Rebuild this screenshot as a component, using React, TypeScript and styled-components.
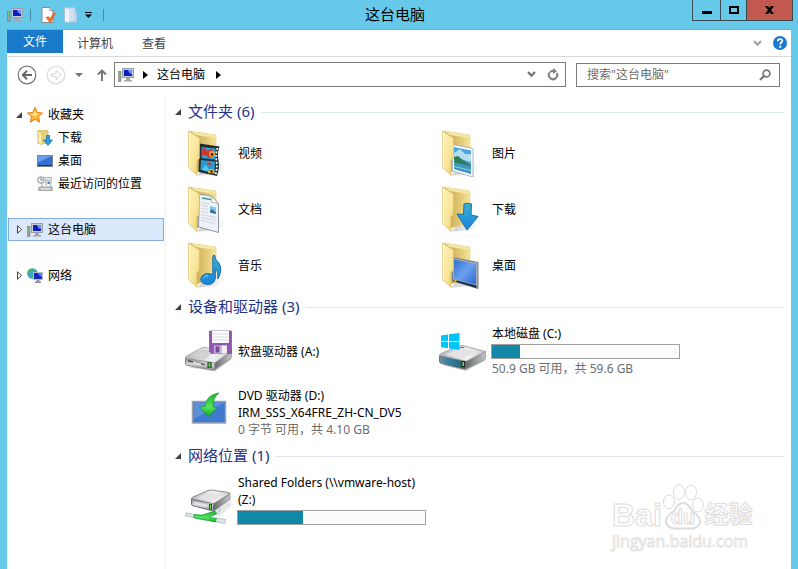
import React from 'react';
import styled, { createGlobalStyle, css } from 'styled-components';

const GlobalStyle = createGlobalStyle`
  * { box-sizing: border-box; }
  body {
    margin: 0;
    background: #66c9ea;
    color: #000;
    font: 12px/17px "Noto Sans", "Noto Sans CJK SC", sans-serif;
  }
  button, input { font: inherit; color: inherit; }
  h1, h2, ul { margin: 0; padding: 0; font-weight: 400; }
  ul { list-style: none; }
  svg { display: block; flex: none; }
`;

const Window = styled.div`
  display: flex;
  flex-direction: column;
  min-height: 100vh;
  background: #66c9ea;
  position: relative;
`;

const TitleBar = styled.header`
  display: grid;
  grid-template-columns: 1fr auto 1fr;
  height: 29px;
  padding-right: 5px;
`;

const QuickTools = styled.div`
  display: flex;
  align-items: center;
  padding-left: 7px;
`;

const Divider = styled.span`
  width: 1px;
  height: 12px;
  margin: 0 10px 0 7px;
  background: #4a8aa0;
`;

const PlainButton = styled.button`
  display: flex;
  align-items: center;
  justify-content: center;
  padding: 0;
  border: 0;
  background: none;
`;

const QuickButton = styled(PlainButton)`
  margin-right: 8px;
`;

const Title = styled.h1`
  padding-right: 3px;
  font-size: 15px;
  line-height: 29px;
`;

const WindowButtons = styled.div`
  display: flex;
  justify-self: end;
  height: 21px;
  border: 1px solid #3b4a50;
  border-top: 0;
`;

const WindowButton = styled(PlainButton)<{ $close?: boolean }>`
  width: ${p => (p.$close ? 46 : 26)}px;
  background: ${p => (p.$close ? '#c1594f' : 'none')};
  &:first-child { width: 27px; }
  & + & { border-left: 1px solid #3b4a50; }
`;

const Client = styled.div`
  flex: 1;
  display: flex;
  flex-direction: column;
  margin: 0 7px;
  border-top: 1px solid #7fa9b8;
  background: #fff;
`;

const Ribbon = styled.nav`
  display: flex;
  height: 27px;
  border-bottom: 1px solid #d9d9d9;
`;

const RibbonTab = styled.button<{ $active?: boolean }>`
  height: 23px;
  padding: 0 ${p => (p.$active ? 16 : 0)}px;
  margin-right: ${p => (p.$active ? 14 : 29)}px;
  border: 0;
  background: ${p => (p.$active ? '#1979ca' : 'none')};
  color: ${p => (p.$active ? '#fff' : '#444')};
  line-height: ${p => (p.$active ? 22 : 27)}px;
`;

const RibbonEnd = styled.div`
  display: flex;
  align-items: center;
  gap: 11px;
  margin-left: auto;
  padding-right: 4px;
`;

const AddressRow = styled.div`
  display: flex;
  align-items: center;
  height: 35px;
  padding: 0 11px 0 10px;
`;

const NavButtons = styled.div`
  display: flex;
  align-items: center;
  width: 97px;
`;

const NavButton = styled(PlainButton)<{ $gap?: number }>`
  margin-right: ${p => p.$gap ?? 0}px;
`;

const AddressBox = styled.div`
  flex: 1;
  display: flex;
  align-items: center;
  gap: 9px;
  height: 25px;
  padding: 0 6px 0 3px;
  border: 1px solid #7b7b7b;
`;

const Crumb = styled(PlainButton)`
  padding-right: 2px;
`;

const AddressEnd = styled.div`
  display: flex;
  gap: 11px;
  margin-left: auto;
`;

const SearchBox = styled.label`
  display: flex;
  align-items: center;
  width: 204px;
  height: 24px;
  margin-left: 10px;
  padding: 0 8px 0 10px;
  border: 1px solid #7b7b7b;
`;

const SearchInput = styled.input`
  flex: 1;
  min-width: 0;
  padding: 0;
  border: 0;
  outline: 0;
  background: none;
  &::placeholder { color: #6d6d6d; opacity: 1; }
`;

const Body = styled.div`
  flex: 1;
  display: flex;
  margin-top: 3px;
`;

const Sidebar = styled.nav`
  width: 159px;
  padding: 8px 1px;
  border-right: 1px solid #f2f2f2;
`;

const TreeGroup = styled.ul`
  & + & { margin-top: 23px; }
`;

const TreeLink = styled.a<{ $child?: boolean; $selected?: boolean }>`
  display: flex;
  align-items: center;
  gap: 5px;
  height: 23px;
  padding-left: ${p => (p.$child ? 28 : 7)}px;
  border: 1px solid transparent;
  color: #000;
  text-decoration: none;
  white-space: nowrap;
  ${p => p.$selected && css`
    border-color: #84acdd;
    background: #dbe9fd;
  `}
`;

const Content = styled.main`
  flex: 1;
  min-width: 0;
  padding: 5px 7px 0 9px;
`;

const SectionHead = styled.h2`
  display: flex;
  align-items: center;
  gap: 7px;
  height: 23px;
  margin-bottom: 2px;
  color: #1e3287;
  font-size: 15px;
  line-height: 23px;
  &::after {
    content: "";
    flex: 1;
    height: 1px;
    margin-top: 2px;
    background: #dbe7f3;
  }
`;

const Tiles = styled.ul<{ $spaced?: boolean }>`
  display: grid;
  grid-template-columns: repeat(auto-fill, 254px);
  row-gap: ${p => (p.$spaced ? 5 : 0)}px;
  padding: ${p => (p.$spaced ? '3px 0 4px 9px' : '0 0 2px 9px')};
`;

const Tile = styled.li`
  display: flex;
  align-items: center;
  gap: 5px;
  height: 56px;
`;

const TileText = styled.div`
  flex: 1;
  min-width: 0;
  padding-right: 12px;
`;

const Line = styled.div<{ $muted?: boolean }>`
  padding-left: 1px;
  color: ${p => (p.$muted ? '#6d6d6d' : '#000')};
`;

const Meter = styled.div`
  height: 15px;
  margin: 2px 0 1px;
  border: 1px solid #a0a0a0;
  background: #fbfbfb;
`;

const MeterFill = styled.div`
  height: 100%;
  background: #1188a6;
`;

const Watermark = styled.div`
  position: absolute;
  right: 43px;
  bottom: 17px;
  width: 143px;
  color: #fff;
  pointer-events: none;
`;

const MarkRow = styled.div`
  display: flex;
  align-items: flex-end;
  height: 47px;
  font: 700 32px/30px "Liberation Sans", "Noto Sans CJK SC", sans-serif;
  -webkit-text-stroke: 1px #dcdcdc;
`;

const MarkPaw = styled.span`
  position: relative;
  width: 42px;
  height: 47px;
`;

const MarkDu = styled.span`
  position: absolute;
  left: 9px;
  bottom: 3px;
  font-size: 20px;
  line-height: 20px;
`;

const MarkCn = styled.span`
  margin-left: 1px;
  font-size: 24px;
`;

const MarkUrl = styled.div`
  font: 16px/22px "Open Sans", sans-serif;
  -webkit-text-stroke: 1px #e4e4e4;
`;

/* ---------- small icons ---------- */

const PcIcon = () => (
  <svg width="16" height="16" viewBox="0 0 16 16">
    <rect x="4.5" y="1.5" width="11" height="9" fill="#c9ccd4" stroke="#9a9ea8" />
    <rect x="6" y="3" width="8" height="6" fill="#0a1fbd" />
    <path d="M10 3h4v4q-3 0-4-4z" fill="#6f8bf5" />
    <path d="M8 11h4v2h2v1.500H6V13h2z" fill="#a6a6a6" />
    <rect x="0.500" y="4.500" width="2.500" height="10" fill="#9da39d" stroke="#777" strokeWidth=".6" />
    <rect x="1.200" y="6" width="1.200" height="2" fill="#52e052" />
  </svg>
);

const PageCheckIcon = () => (
  <svg width="15" height="16" viewBox="0 0 15 16">
    <path d="M1 .5h8l3 3v12H1z" fill="#fff" stroke="#8d8d8d" />
    <path d="M9 .5v3h3" fill="#e6e6e6" stroke="#8d8d8d" />
    <path d="M5 10.500l2.500-1 1.500 2L13 5.500l1.500 1L10 15H8.500z" fill="#ee6e2e" stroke="#d25a22" strokeWidth=".5" />
  </svg>
);

const NewFolderIcon = () => (
  <svg width="13" height="16" viewBox="0 0 13 16">
    <path d="M.5.500h11V5l1 1v9H.5z" fill="#c4d8ee" stroke="#a9c1de" />
    <path d="M1 1l4 1.500v13L1 14.500z" fill="#edf4fb" />
    <path d="M6 2v12M8 2v12" stroke="#dceaf7" />
  </svg>
);

const CustomizeIcon = () => (
  <svg width="11" height="6" viewBox="0 0 11 6"><path d="M0 .5h7" stroke="#000" /><path d="M0 2.500h7L3.500 6z" fill="#000" /></svg>
);

const MinIcon = () => <svg width="10" height="10"><rect y="6" width="10" height="3" /></svg>;
const MaxIcon = () => <svg width="10" height="8"><rect x="1" y="1" width="8" height="6" fill="none" stroke="#000" strokeWidth="2" /></svg>;
const CloseIcon = () => (
  <svg width="9" height="8"><path d="M0 0h3l1.500 2L6 0h3L6 4l3 4H6L4.500 6 3 8H0l3-4z" /></svg>
);

const Chevron = ({ color }: { color: string }) => (
  <svg width="9" height="7" viewBox="0 0 9 7"><path d="M1 1l3.500 3.800L8 1" fill="none" stroke={color} strokeWidth="2" /></svg>
);

const HelpIcon = () => (
  <svg width="14" height="14" viewBox="0 0 14 14">
    <circle cx="7" cy="7" r="7" fill="#1979ca" />
    <path d="M4.800 5.300C4.800 2.400 9.400 2.500 9.300 5 9.200 6.500 7.200 6.600 7.200 8.500" fill="none" stroke="#fff" strokeWidth="1.800" />
    <rect x="6.200" y="9.800" width="2" height="2" fill="#fff" />
  </svg>
);

const CircleArrow = ({ forward }: { forward?: boolean }) => (
  <svg width="20" height="20" viewBox="0 0 20 20">
    <circle cx="10" cy="10" r="8.800" fill="none" stroke={forward ? '#dadada' : '#777'} strokeWidth="1.200" />
    {forward
      ? <path d="M5 8.800h5V5.500l5 4.500-5 4.500v-3.300H5z" fill="none" stroke="#d4d4d4" />
      : <path d="M15 10H6M10 5.800L5.800 10l4.200 4.200" fill="none" stroke="#666" strokeWidth="2" />}
  </svg>
);

const DownTriangle = () => <svg width="8" height="4"><path d="M0 0h8L4 4z" fill="#777" /></svg>;
const UpArrow = () => (
  <svg width="10" height="12" viewBox="0 0 10 12"><path d="M5 12V2M1 5.500L5 1.500l4 4" fill="none" stroke="#777" strokeWidth="2" /></svg>
);
const RightTriangle = () => <svg width="5" height="8"><path d="M0 0l5 4-5 4z" /></svg>;

const RefreshIcon = () => (
  <svg width="12" height="13" viewBox="0 0 12 13">
    <path d="M2.800 4.300A4.200 4.200 0 1 0 9.700 5" fill="none" stroke="#808080" strokeWidth="2" />
    <path d="M3 3.800Q4.500 2.800 6.500 3" fill="none" stroke="#808080" strokeWidth="2" />
    <path d="M6 0l4 3.200L6 6z" fill="#808080" />
  </svg>
);

const SearchIcon = () => (
  <svg width="12" height="12" viewBox="0 0 12 12">
    <circle cx="7.500" cy="4.500" r="3.400" fill="none" stroke="#777" strokeWidth="1.700" />
    <path d="M5 7L1 11" stroke="#777" strokeWidth="2.200" />
  </svg>
);

const OpenArrow = () => <svg width="6" height="6"><path d="M6 0v6H0z" fill="#404040" /></svg>;
const ClosedArrow = () => (
  <svg width="6" height="9"><path d="M1.500 .8v7.400L5.500 4.500z" fill="#fff" stroke="#404040" /></svg>
);

const StarIcon = () => (
  <svg width="16" height="16" viewBox="0 0 16 16">
    <path d="M8 .5l2.200 5 5.300.5-4 3.600 1.200 5.600L8 12.300l-4.700 2.900 1.200-5.600-4-3.600 5.300-.5z" fill="#ffb52e" stroke="#dc7d1b" />
    <path d="M8 3l1.300 3.500 3.200.3L8 9.500l-4.500-2.700 3.200-.3z" fill="#ffe08a" />
  </svg>
);

const SmallDownloadIcon = () => (
  <svg width="16" height="16" viewBox="0 0 16 16">
    <path d="M1 .5h10l.5 13H1z" fill="#ecd078" stroke="#cbb05a" strokeWidth=".6" />
    <path d="M1 .5l4 2.500v12L1 13z" fill="#fbeeb0" stroke="#cbb05a" strokeWidth=".6" />
    <path d="M9.500 5.500h3V10H15.500L11 15.500 6.500 10h3z" fill="#2e9be6" stroke="#14699f" strokeWidth=".7" />
  </svg>
);

const SmallDesktopIcon = () => (
  <svg width="16" height="16" viewBox="0 0 16 16">
    <rect x=".5" y="2.500" width="15" height="11" fill="#326fd0" stroke="#7c8796" />
    <path d="M1 3h14L1 9.500z" fill="#6c9de8" />
    <path d="M1 12.500h14" stroke="#1c3359" />
  </svg>
);

const RecentIcon = () => (
  <svg width="16" height="16" viewBox="0 0 16 16">
    <path d="M4 1.500h10.500l-1 10H5z" fill="#f3f6f9" stroke="#999" strokeWidth=".8" />
    <path d="M8 4h5M8 6h2M8 8h2" stroke="#9aa8b5" />
    <rect x="10.500" y="5.500" width="2.500" height="2.500" fill="#3f8fd8" />
    <path d="M2 11h13l.5 3.500h-14z" fill="#c2c2c2" stroke="#8b8b8b" strokeWidth=".7" />
    <path d="M4 13h9" stroke="#eee" />
    <circle cx="4" cy="4" r="3.300" fill="#eef3f7" stroke="#8b8f94" />
    <path d="M4 2v2h1.500" fill="none" stroke="#4b5560" strokeWidth=".8" />
  </svg>
);

const NetworkIcon = () => (
  <svg width="16" height="16" viewBox="0 0 16 16">
    <circle cx="5.500" cy="5.500" r="5.300" fill="#3aa0e0" />
    <path d="M3 .8C5 2 3 5 .8 7 0 4 1 2 3 .8zM6 1l3 1.500L7 5 5 4zM3 8l3-1v3.500z" fill="#42bf45" />
    <rect x="6.500" y="4.500" width="9" height="7" fill="#1329bd" stroke="#b9bfca" />
    <path d="M10.500 5h4.500v4q-3-1-4.500-4z" fill="#5c7df0" />
    <path d="M9.500 12h3v1.500H14V15H8v-1.500h1.500z" fill="#8f8f8f" />
  </svg>
);

/* ---------- 48px icons ---------- */

type FolderKind = 'video' | 'pictures' | 'docs' | 'downloads' | 'music' | 'desktop';

const folderInsert: Record<FolderKind, React.ReactNode> = {
  video: (
    <g>
      <path d="M15.500 14.500l20 3q-2.500 7-1 14t-1.500 15.500L14.500 43z" fill="#222d33" />
      <path d="M17.500 18l14 1.500-.5 11-13.500-1.500z" fill="#27a5dd" />
      <path d="M17 31l14 1.500-.5 12L16.500 41z" fill="#2d9bd2" />
      <path d="M18 20l3-1 2 3 4-2 3 2-1 5-4 2-4-3-3 1z" fill="#d1372f" />
      <circle cx="28" cy="25" r="3" fill="#f0a52a" /><circle cx="28" cy="25.500" r="1.400" fill="#541a16" />
      <path d="M23 34l2-1 3 3-2 1z" fill="#d1372f" />
      <path d="M24 44q0-4 3.500-4t3 4.500z" fill="#e8b232" /><circle cx="27.500" cy="42.500" r="1.200" fill="#3a1712" />
      <path d="M18 40l4-4 3 5-3 1z" fill="#58c9ea" />
      <path d="M33.500 19q-2 6-1 13t-1 14" fill="none" stroke="#eef4f6" strokeWidth="1.800" strokeDasharray="2 1.500" />
    </g>
  ),
  docs: (
    <g>
      <path d="M15.500 9.500q7 0 12.500 2l6.500 7v29L14.500 42z" fill="#eff1f8" stroke="#8f979e" />
      <path d="M28 11.500l-.5 5.500 7 1.500z" fill="#fff" stroke="#8f979e" strokeWidth=".7" />
      <path d="M18 13l9 1.500" stroke="#3b9c99" strokeWidth="1.300" />
      <path d="M17 17.500l8 1M17 20.500l7 1M17 23.500l7 1M17 26.500l7 1M17 29.500l15 3M17 32.500l15 3M17 35.500l14 3" stroke="#ccd0d8" strokeWidth=".9" />
      <path d="M26 21l6 1.500V29l-6-1.500z" fill="#82c6ee" />
      <path d="M26 26l2-2 4 3.500V29l-6-1.500z" fill="#2b7893" />
    </g>
  ),
  music: (
    <g fill="url(#blueFill)" stroke="#1e6aa6" strokeWidth="1">
      <path d="M28.800 17q0-3 1.500-3 1 5 4.500 8 4.500 6-1 16 .5-8-2.500-11v10q-1 6.500-7.500 6.500-7-.5-7-5.500 1-5.500 8-5.500l4 1z" />
      <path d="M19 37.500q1.500-2.500 5-3" fill="none" stroke="#9ad8f7" />
    </g>
  ),
  pictures: (
    <g>
      <path d="M14.500 15.500l20.500 4V48l-20.500-6z" fill="#fff" stroke="#a9b4bd" />
      <path d="M16 18l17 3.500V45l-17-5z" fill="#4aa5de" />
      <path d="M16 24l6-4 5 5 6 0v8l-17-5z" fill="#b5def0" />
      <path d="M16 28l4-1 6 5 7 4v2l-17-3z" fill="#2f7d55" />
      <path d="M16 33l17 4v8l-17-5z" fill="#3f96be" />
      <path d="M16 37l17 4v1l-17-4z" fill="#8dd0de" />
    </g>
  ),
  downloads: (
    <path d="M26 19q3-1.500 7.500 0L33 30l7 1.500L29 45 19 29l6.500.5z" fill="url(#blueFill)" stroke="#1670aa" />
  ),
  desktop: (
    <g>
      <path d="M14.500 16.500l25.500 5v26L14.500 40z" fill="#a7adb6" stroke="#767d87" />
      <path d="M16 18.500l22 4.500v20.500L16 38z" fill="url(#screenFill)" />
      <path d="M15.500 38.500L38.500 44.500v2.500l-23-7z" fill="#1a2c47" />
      <circle cx="17.500" cy="39.500" r="1.200" fill="#e3c23a" />
    </g>
  ),
};

const Gradients = () => (
  <svg width="0" height="0" aria-hidden="true">
    <defs>
      <linearGradient id="backFill" x1="0" x2="1"><stop offset="0" stopColor="#b99b45" /><stop offset=".5" stopColor="#dcc06b" /><stop offset="1" stopColor="#f6e397" /></linearGradient>
      <linearGradient id="flapFill" x1="0" x2="1" y2="1"><stop offset="0" stopColor="#fdf3ba" /><stop offset=".6" stopColor="#f8e59a" /><stop offset="1" stopColor="#e6c660" /></linearGradient>
      <linearGradient id="blueFill" x1="0" x2="0" y2="1"><stop offset="0" stopColor="#3db1cf" /><stop offset="1" stopColor="#1584e0" /></linearGradient>
      <linearGradient id="screenFill" x1="0" x2="1" y2="1"><stop offset="0" stopColor="#2f6fd0" /><stop offset=".5" stopColor="#6ba0ee" /><stop offset="1" stopColor="#2a66cf" /></linearGradient>
      <linearGradient id="topFill" x1="0" x2="1"><stop offset="0" stopColor="#b9b9bb" /><stop offset=".6" stopColor="#f1f1f2" /><stop offset="1" stopColor="#cfcfd0" /></linearGradient>
      <linearGradient id="sideFill" x1="0" x2="1"><stop offset="0" stopColor="#696a6c" /><stop offset="1" stopColor="#c5c6c8" /></linearGradient>
      <linearGradient id="frontFill" x1="0" x2="0" y2="1"><stop offset="0" stopColor="#8b8c8f" /><stop offset=".5" stopColor="#d4d5d8" /><stop offset="1" stopColor="#8f9093" /></linearGradient>
      <linearGradient id="tealFill" x1="0" x2="1"><stop offset="0" stopColor="#6b8d9c" /><stop offset=".4" stopColor="#2c7fa0" /><stop offset="1" stopColor="#2b5a68" /></linearGradient>
      <linearGradient id="greenFill" x1="0" x2="0" y2="1"><stop offset="0" stopColor="#1eaf35" /><stop offset=".6" stopColor="#53e558" /><stop offset="1" stopColor="#12a32b" /></linearGradient>
      <linearGradient id="shadowFill" x1="0" x2="1"><stop offset="0" stopColor="#999" stopOpacity=".5" /><stop offset="1" stopColor="#aaa" stopOpacity="0" /></linearGradient>
    </defs>
  </svg>
);

const FolderIcon = ({ kind }: { kind: FolderKind }) => (
  <svg width="48" height="48" viewBox="0 0 48 48">
    <path d="M13 46.500L30 30l13 8q-8 8-20 8z" fill="url(#shadowFill)" />
    <path d="M5 2l27 4v32l-19 5z" fill="url(#backFill)" stroke="#e6d185" strokeWidth=".6" />
    <path d="M6 2.300l25.500 3.900V9L12 6z" fill="#f7e7a4" />
    {folderInsert[kind]}
    <path d="M4.500 2l11 7v20.500l-2.500 2v15l-8.500-8z" fill="url(#flapFill)" stroke="#d8bb66" strokeWidth=".6" />
    <path d="M5.500 4v34" stroke="#fffbe0" strokeWidth=".8" />
  </svg>
);

const FloppyDriveIcon = () => (
  <svg width="48" height="48" viewBox="0 0 48 48" strokeLinejoin="round">
    <path d="M4 40l27 4.500 16-12v-2l-15 7z" fill="#bbb" opacity=".7" />
    <path d="M1.500 31v6q0 1 2 1.500L29 43q2 .5 2-1v-7z" fill="url(#frontFill)" stroke="#77787b" strokeWidth=".8" />
    <path d="M31 35v7.500l16-11q.5-.5.500-2V24z" fill="url(#sideFill)" stroke="#8a8b8d" strokeWidth=".6" />
    <path d="M1.500 31q0-1.500 2-2.500L17 21q1.500-.8 4-.5l26.500 3.500L32 35q-1.500 1-3.500.500z" fill="url(#topFill)" stroke="#999" strokeWidth=".7" />
    <path d="M7 29.500l12-6.500 10 1.500-8 7z" fill="#d2d2d4" stroke="#bdbdbf" strokeWidth=".5" />
    <path d="M4 33l17 4v1.200L4 34.500z" fill="#4a4b4d" />
    <path d="M9 34.500l8 2v1.500l-8-2z" fill="#efefef" />
    <rect x="23.500" y="35" width="4" height="6" fill="#222" /><rect x="24.500" y="35.500" width="2" height="5" fill="#4ce03e" />
    <path d="M25.500 4h22v22.500h-20l-2-2z" fill="#9156b5" stroke="#7c4b9f" strokeWidth=".7" />
    <rect x="28" y="4" width="17" height="12" fill="#fff" />
    <path d="M28.500 7h16M28.500 10h16M28.500 13h16" stroke="#d3dbe3" />
    <rect x="30" y="18.500" width="13" height="8" fill="#cbbcd9" />
    <rect x="31.500" y="19.500" width="4" height="6" fill="#7d46a0" />
    <path d="M38 18.500h5v8h-5z" fill="#f0edf5" />
  </svg>
);

const LocalDiskIcon = () => (
  <svg width="48" height="48" viewBox="0 0 48 48" strokeLinejoin="round">
    <path d="M4 38l24 6 20-11-2-3-17 8z" fill="#bbb" opacity=".8" />
    <path d="M1.500 28.500v6q0 1.500 2 2L26 42q2 .5 2-1v-7z" fill="url(#tealFill)" stroke="#6b7175" strokeWidth=".9" />
    <path d="M28 34v8l18-9q1.500-1 1.500-2.500V24.500z" fill="url(#sideFill)" stroke="#8a8b8d" strokeWidth=".6" />
    <path d="M1.500 28.500q0-1 1.500-2L21 19q2-.8 4-.3l22.500 5.800L30 33.500q-1.500.8-3.500.5z" fill="url(#topFill)" stroke="#888" strokeWidth=".7" />
    <path d="M8 27.500l15-6 13 3q-5 5-13 6.500z" fill="#e4e4e6" />
    <ellipse cx="24" cy="20.500" rx="2.500" ry=".8" fill="#777" />
    <rect x="23.500" y="34" width="3.500" height="6" fill="#1d2b20" /><rect x="24.500" y="35" width="1.500" height="4" fill="#62e840" />
    <path d="M3 8.500L10 7.500V14H3zM11 7.300L21.500 6v8H11zM3 15h7v6.300L3 20.300zM11 15h10.500v8L11 21.500z" fill="#00c4f5" />
  </svg>
);

const DvdIcon = () => (
  <svg width="48" height="48" viewBox="0 0 48 48">
    <rect x="8.500" y="13.500" width="33" height="21.500" fill="#3f7ace" stroke="#9ba4ad" strokeWidth="1.500" />
    <path d="M9.500 14.500h31L9.500 31z" fill="#5d90d8" />
    <path d="M35 5q-6 4-6 14l4 .5L24.500 28.500 15.500 19l5.500-.5Q22 7 35 5z" fill="url(#greenFill)" stroke="#0e9a2b" strokeWidth=".7" />
  </svg>
);

const NetworkDriveIcon = () => (
  <svg width="48" height="48" viewBox="0 0 48 48" strokeLinejoin="round">
    <path d="M22 38l14 2 11-10V20l-16 14z" fill="#ddd" opacity=".7" />
    <path d="M2 37l9 1.500-1 3-8.500-1.500zM32 42l9.500 1.500-1 4-10-2zM30 35l5-3.500 1.500 3-5 3.500z" fill="#dde8ea" stroke="#a9b8bb" strokeWidth=".8" />
    <path d="M10 38.500l8 .5 13-4 1.500 3-7 3 7 1.500-1 3.500L10 42z" fill="url(#greenFill)" stroke="#128a3a" strokeWidth=".6" />
    <path d="M7.500 23v5q0 1.500 2 2L27.500 34.500q2 .5 2-1V27z" fill="url(#frontFill)" stroke="#66686b" strokeWidth=".9" />
    <path d="M10 25.500l13 3v3l-13-3z" fill="#dfe2ee" />
    <path d="M29.500 27v8L45 24q1-.8 1-2v-5z" fill="url(#sideFill)" stroke="#77797b" strokeWidth=".6" />
    <path d="M7.500 23q0-1 1.500-2L24 14.500q2-.8 4-.5l16 2.500q3 .5 1 2L31 27q-1.500.8-3.500.3z" fill="url(#topFill)" stroke="#777" strokeWidth=".8" />
    <path d="M13 22.500l13-6 12 2q-4 4.500-12 6z" fill="#e4e4e6" />
    <rect x="25" y="28" width="3" height="5.500" fill="#1d2b20" /><rect x="25.700" y="28.500" width="1.500" height="4.500" fill="#62e840" />
  </svg>
);

const Paw = () => (
  <svg width="42" height="47" viewBox="0 0 42 47" fill="#fff" stroke="#dcdcdc">
    <ellipse cx="7" cy="19" rx="5.500" ry="7" /><ellipse cx="17" cy="9" rx="5.500" ry="7.500" />
    <ellipse cx="29" cy="9.500" rx="5.500" ry="7.500" /><ellipse cx="36" cy="22" rx="5.500" ry="7" />
    <path d="M21 20q5 0 9 8 8 5 8 11-1 6-8 6.500H13Q5 45 4 39q0-6 8-11 4-8 9-8z" strokeWidth="2" />
  </svg>
);

/* ---------- page ---------- */

const folders: { name: string; kind: FolderKind }[] = [
  { name: '视频', kind: 'video' },
  { name: '图片', kind: 'pictures' },
  { name: '文档', kind: 'docs' },
  { name: '下载', kind: 'downloads' },
  { name: '音乐', kind: 'music' },
  { name: '桌面', kind: 'desktop' },
];

const Usage = ({ label, percent }: { label: string; percent: number }) => (
  <Meter role="meter" aria-label={label} aria-valuenow={percent} aria-valuemin={0} aria-valuemax={100}>
    <MeterFill style={{ width: `${percent}%` }} />
  </Meter>
);

export default function App() {
  return (
    <Window>
      <GlobalStyle />
      <TitleBar>
        <QuickTools>
          <PcIcon />
          <Divider />
          <QuickButton aria-label="属性"><PageCheckIcon /></QuickButton>
          <QuickButton aria-label="新建文件夹"><NewFolderIcon /></QuickButton>
          <PlainButton aria-label="自定义快速访问工具栏"><CustomizeIcon /></PlainButton>
          <Divider />
        </QuickTools>
        <Title>这台电脑</Title>
        <WindowButtons>
          <WindowButton aria-label="最小化"><MinIcon /></WindowButton>
          <WindowButton aria-label="最大化"><MaxIcon /></WindowButton>
          <WindowButton $close aria-label="关闭"><CloseIcon /></WindowButton>
        </WindowButtons>
      </TitleBar>

      <Client>
        <Gradients />
        <Ribbon>
          <RibbonTab $active>文件</RibbonTab>
          <RibbonTab>计算机</RibbonTab>
          <RibbonTab>查看</RibbonTab>
          <RibbonEnd>
            <PlainButton aria-label="展开功能区"><Chevron color="#a0a0a0" /></PlainButton>
            <PlainButton aria-label="帮助"><HelpIcon /></PlainButton>
          </RibbonEnd>
        </Ribbon>

        <AddressRow>
          <NavButtons>
            <NavButton $gap={9} aria-label="后退"><CircleArrow /></NavButton>
            <NavButton $gap={9} aria-label="前进" disabled><CircleArrow forward /></NavButton>
            <NavButton $gap={14} aria-label="最近浏览的位置"><DownTriangle /></NavButton>
            <NavButton aria-label="上移"><UpArrow /></NavButton>
          </NavButtons>
          <AddressBox>
            <PcIcon />
            <RightTriangle />
            <Crumb>这台电脑</Crumb>
            <RightTriangle />
            <AddressEnd>
              <PlainButton aria-label="以前的位置"><Chevron color="#707070" /></PlainButton>
              <PlainButton aria-label="刷新"><RefreshIcon /></PlainButton>
            </AddressEnd>
          </AddressBox>
          <SearchBox>
            <SearchInput type="text" aria-label="搜索" placeholder={'搜索"这台电脑"'} />
            <SearchIcon />
          </SearchBox>
        </AddressRow>

        <Body>
          <Sidebar>
            <TreeGroup>
              <li><TreeLink href="#favorites"><OpenArrow /><StarIcon />收藏夹</TreeLink></li>
              <li><TreeLink $child href="#downloads"><SmallDownloadIcon />下载</TreeLink></li>
              <li><TreeLink $child href="#desktop"><SmallDesktopIcon />桌面</TreeLink></li>
              <li><TreeLink $child href="#recent"><RecentIcon />最近访问的位置</TreeLink></li>
            </TreeGroup>
            <TreeGroup>
              <li><TreeLink $selected href="#pc"><ClosedArrow /><PcIcon />这台电脑</TreeLink></li>
            </TreeGroup>
            <TreeGroup>
              <li><TreeLink href="#network"><ClosedArrow /><NetworkIcon />网络</TreeLink></li>
            </TreeGroup>
          </Sidebar>

          <Content>
            <SectionHead><OpenArrow />文件夹 (6)</SectionHead>
            <Tiles>
              {folders.map(f => (
                <Tile key={f.kind}>
                  <FolderIcon kind={f.kind} />
                  <TileText><Line>{f.name}</Line></TileText>
                </Tile>
              ))}
            </Tiles>

            <SectionHead><OpenArrow />设备和驱动器 (3)</SectionHead>
            <Tiles $spaced>
              <Tile>
                <FloppyDriveIcon />
                <TileText><Line>软盘驱动器 (A:)</Line></TileText>
              </Tile>
              <Tile>
                <LocalDiskIcon />
                <TileText>
                  <Line>本地磁盘 (C:)</Line>
                  <Usage label="本地磁盘 (C:)" percent={15} />
                  <Line $muted>50.9 GB 可用，共 59.6 GB</Line>
                </TileText>
              </Tile>
              <Tile>
                <DvdIcon />
                <TileText>
                  <Line>DVD 驱动器 (D:)</Line>
                  <Line>IRM_SSS_X64FRE_ZH-CN_DV5</Line>
                  <Line $muted>0 字节 可用，共 4.10 GB</Line>
                </TileText>
              </Tile>
            </Tiles>

            <SectionHead><OpenArrow />网络位置 (1)</SectionHead>
            <Tiles $spaced>
              <Tile>
                <NetworkDriveIcon />
                <TileText>
                  <Line>Shared Folders (\\vmware-host) (Z:)</Line>
                  <Usage label="Shared Folders (Z:)" percent={35} />
                </TileText>
              </Tile>
            </Tiles>
          </Content>
        </Body>
      </Client>

      <Watermark>
        <MarkRow>
          <span>Bai</span>
          <MarkPaw><Paw /><MarkDu>du</MarkDu></MarkPaw>
          <MarkCn>经验</MarkCn>
        </MarkRow>
        <MarkUrl>jingyan.baidu.com</MarkUrl>
      </Watermark>
    </Window>
  );
}
